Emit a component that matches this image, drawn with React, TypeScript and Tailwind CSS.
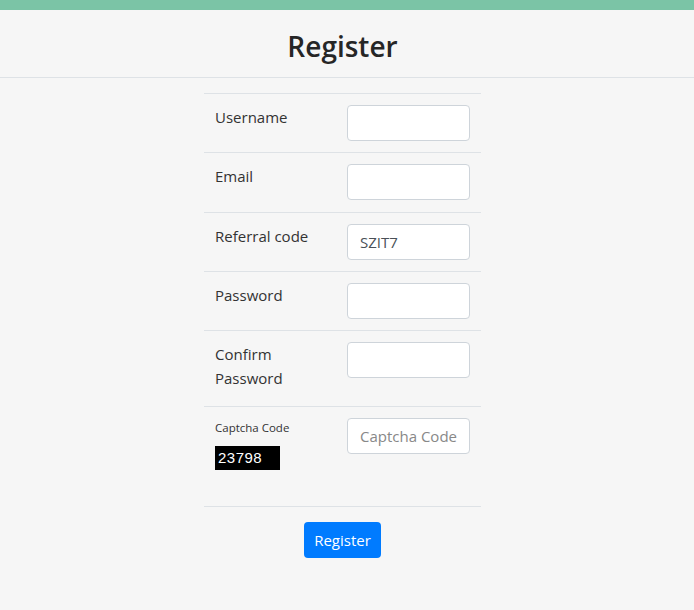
import React from 'react';

const font = { fontFamily: '"Open Sans", "Noto Sans", sans-serif' };

const Field = ({ label, value, tall }: { label: React.ReactNode; value?: string; tall?: boolean }) => (
  <div className={`flex border-t border-[#dee2e6] px-[11px] pt-[11px] ${tall ? 'h-[76px]' : 'h-[59.33px]'}`}>
    <div className="w-[120px] text-[15px] leading-6 text-[#333]">{label}</div>
    <input
      defaultValue={value}
      className="ml-auto h-[36px] w-[123px] rounded-[4px] border border-[#ced4da] bg-white px-3 text-[15px] text-[#495057] outline-none"
    />
  </div>
);

export default function App() {
  return (
    <div className="min-h-screen bg-[#f6f6f6]" style={font}>
      <div className="h-[10px] bg-[#7bc4a6]" />
      <header className="h-[68px] border-b border-[#dee2e6]">
        <div className="flex h-full w-[685px] items-center justify-center pt-[4px]">
          <h1 className="text-[28px] font-semibold text-[#262626]">Register</h1>
        </div>
      </header>

      <div className="w-[685px]">
        <main className="mx-auto mt-[15px] w-[277px]">
          <Field label="Username" />
          <Field label="Email" />
          <Field label="Referral code" value="SZIT7" />
          <Field label="Password" />
          <Field label={<>Confirm<br />Password</>} tall />

          <div className="flex h-[101px] border-y border-[#dee2e6] px-[11px] pt-[11px]">
            <div className="w-[120px]">
              <div className="mt-[2px] text-[11.5px] leading-4 text-[#333]">Captcha Code</div>
              <div
                className="mt-[10px] flex h-[24px] w-[65px] items-center bg-black pl-[3px] text-[15px] tracking-[0.5px] text-white"
                style={{ fontFamily: '"Liberation Sans", Arial, sans-serif' }}
              >
                23798
              </div>
            </div>
            <input
              placeholder="Captcha Code"
              className="ml-auto h-[36px] w-[123px] rounded-[4px] border border-[#ced4da] bg-white px-3 text-[15px] text-[#495057] outline-none placeholder:text-[#888]"
            />
          </div>

          <div className="flex justify-center pt-[15px]">
            <button className="h-[36px] w-[77px] rounded-[4px] bg-[#007bff] text-[15px] text-white">Register</button>
          </div>
        </main>
      </div>
    </div>
  );
}
